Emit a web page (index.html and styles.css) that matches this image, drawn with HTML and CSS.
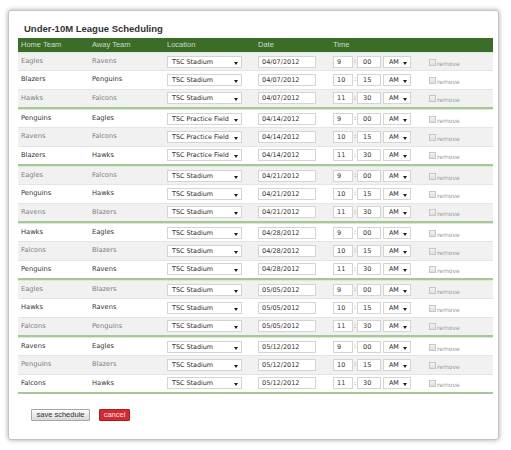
FILE: index.html
```html
<!DOCTYPE html>
<html lang="en">
<head>
<meta charset="utf-8">
<title>Under-10M League Scheduling</title>
<link rel="stylesheet" href="styles.css">
</head>
<body>
<div class="page">
  <div class="card">
    <h1 class="title">Under-10M League Scheduling</h1>
    <div class="sched">
      <div class="head">
        <span>Home Team</span><span>Away Team</span><span>Location</span><span>Date</span><span>Time</span><span></span>
      </div>

      <div class="group">
        <div class="row a"><span>Eagles</span><span>Ravens</span><span class="sel loc"><select><option>TSC Stadium</option></select></span><span><input class="date" type="text" value="04/07/2012"></span><span class="time"><input class="hr" type="text" value="9"><i>:</i><input class="mn" type="text" value="00"><span class="sel ap"><select><option>AM</option></select></span></span><label class="rm"><input type="checkbox"><span>remove</span></label></div>
        <div class="row b"><span>Blazers</span><span>Penguins</span><span class="sel loc"><select><option>TSC Stadium</option></select></span><span><input class="date" type="text" value="04/07/2012"></span><span class="time"><input class="hr" type="text" value="10"><i>:</i><input class="mn" type="text" value="15"><span class="sel ap"><select><option>AM</option></select></span></span><label class="rm"><input type="checkbox"><span>remove</span></label></div>
        <div class="row a"><span>Hawks</span><span>Falcons</span><span class="sel loc"><select><option>TSC Stadium</option></select></span><span><input class="date" type="text" value="04/07/2012"></span><span class="time"><input class="hr" type="text" value="11"><i>:</i><input class="mn" type="text" value="30"><span class="sel ap"><select><option>AM</option></select></span></span><label class="rm"><input type="checkbox"><span>remove</span></label></div>
      </div>

      <div class="group">
        <div class="row b"><span>Penguins</span><span>Eagles</span><span class="sel loc"><select><option>TSC Practice Field</option></select></span><span><input class="date" type="text" value="04/14/2012"></span><span class="time"><input class="hr" type="text" value="9"><i>:</i><input class="mn" type="text" value="00"><span class="sel ap"><select><option>AM</option></select></span></span><label class="rm"><input type="checkbox"><span>remove</span></label></div>
        <div class="row a"><span>Ravens</span><span>Falcons</span><span class="sel loc"><select><option>TSC Practice Field</option></select></span><span><input class="date" type="text" value="04/14/2012"></span><span class="time"><input class="hr" type="text" value="10"><i>:</i><input class="mn" type="text" value="15"><span class="sel ap"><select><option>AM</option></select></span></span><label class="rm"><input type="checkbox"><span>remove</span></label></div>
        <div class="row b"><span>Blazers</span><span>Hawks</span><span class="sel loc"><select><option>TSC Practice Field</option></select></span><span><input class="date" type="text" value="04/14/2012"></span><span class="time"><input class="hr" type="text" value="11"><i>:</i><input class="mn" type="text" value="30"><span class="sel ap"><select><option>AM</option></select></span></span><label class="rm"><input type="checkbox"><span>remove</span></label></div>
      </div>

      <div class="group">
        <div class="row a"><span>Eagles</span><span>Falcons</span><span class="sel loc"><select><option>TSC Stadium</option></select></span><span><input class="date" type="text" value="04/21/2012"></span><span class="time"><input class="hr" type="text" value="9"><i>:</i><input class="mn" type="text" value="00"><span class="sel ap"><select><option>AM</option></select></span></span><label class="rm"><input type="checkbox"><span>remove</span></label></div>
        <div class="row b"><span>Penguins</span><span>Hawks</span><span class="sel loc"><select><option>TSC Stadium</option></select></span><span><input class="date" type="text" value="04/21/2012"></span><span class="time"><input class="hr" type="text" value="10"><i>:</i><input class="mn" type="text" value="15"><span class="sel ap"><select><option>AM</option></select></span></span><label class="rm"><input type="checkbox"><span>remove</span></label></div>
        <div class="row a"><span>Ravens</span><span>Blazers</span><span class="sel loc"><select><option>TSC Stadium</option></select></span><span><input class="date" type="text" value="04/21/2012"></span><span class="time"><input class="hr" type="text" value="11"><i>:</i><input class="mn" type="text" value="30"><span class="sel ap"><select><option>AM</option></select></span></span><label class="rm"><input type="checkbox"><span>remove</span></label></div>
      </div>

      <div class="group">
        <div class="row b"><span>Hawks</span><span>Eagles</span><span class="sel loc"><select><option>TSC Stadium</option></select></span><span><input class="date" type="text" value="04/28/2012"></span><span class="time"><input class="hr" type="text" value="9"><i>:</i><input class="mn" type="text" value="00"><span class="sel ap"><select><option>AM</option></select></span></span><label class="rm"><input type="checkbox"><span>remove</span></label></div>
        <div class="row a"><span>Falcons</span><span>Blazers</span><span class="sel loc"><select><option>TSC Stadium</option></select></span><span><input class="date" type="text" value="04/28/2012"></span><span class="time"><input class="hr" type="text" value="10"><i>:</i><input class="mn" type="text" value="15"><span class="sel ap"><select><option>AM</option></select></span></span><label class="rm"><input type="checkbox"><span>remove</span></label></div>
        <div class="row b"><span>Penguins</span><span>Ravens</span><span class="sel loc"><select><option>TSC Stadium</option></select></span><span><input class="date" type="text" value="04/28/2012"></span><span class="time"><input class="hr" type="text" value="11"><i>:</i><input class="mn" type="text" value="30"><span class="sel ap"><select><option>AM</option></select></span></span><label class="rm"><input type="checkbox"><span>remove</span></label></div>
      </div>

      <div class="group">
        <div class="row a"><span>Eagles</span><span>Blazers</span><span class="sel loc"><select><option>TSC Stadium</option></select></span><span><input class="date" type="text" value="05/05/2012"></span><span class="time"><input class="hr" type="text" value="9"><i>:</i><input class="mn" type="text" value="00"><span class="sel ap"><select><option>AM</option></select></span></span><label class="rm"><input type="checkbox"><span>remove</span></label></div>
        <div class="row b"><span>Hawks</span><span>Ravens</span><span class="sel loc"><select><option>TSC Stadium</option></select></span><span><input class="date" type="text" value="05/05/2012"></span><span class="time"><input class="hr" type="text" value="10"><i>:</i><input class="mn" type="text" value="15"><span class="sel ap"><select><option>AM</option></select></span></span><label class="rm"><input type="checkbox"><span>remove</span></label></div>
        <div class="row a"><span>Falcons</span><span>Penguins</span><span class="sel loc"><select><option>TSC Stadium</option></select></span><span><input class="date" type="text" value="05/05/2012"></span><span class="time"><input class="hr" type="text" value="11"><i>:</i><input class="mn" type="text" value="30"><span class="sel ap"><select><option>AM</option></select></span></span><label class="rm"><input type="checkbox"><span>remove</span></label></div>
      </div>

      <div class="group">
        <div class="row b"><span>Ravens</span><span>Eagles</span><span class="sel loc"><select><option>TSC Stadium</option></select></span><span><input class="date" type="text" value="05/12/2012"></span><span class="time"><input class="hr" type="text" value="9"><i>:</i><input class="mn" type="text" value="00"><span class="sel ap"><select><option>AM</option></select></span></span><label class="rm"><input type="checkbox"><span>remove</span></label></div>
        <div class="row a"><span>Penguins</span><span>Blazers</span><span class="sel loc"><select><option>TSC Stadium</option></select></span><span><input class="date" type="text" value="05/12/2012"></span><span class="time"><input class="hr" type="text" value="10"><i>:</i><input class="mn" type="text" value="15"><span class="sel ap"><select><option>AM</option></select></span></span><label class="rm"><input type="checkbox"><span>remove</span></label></div>
        <div class="row b"><span>Falcons</span><span>Hawks</span><span class="sel loc"><select><option>TSC Stadium</option></select></span><span><input class="date" type="text" value="05/12/2012"></span><span class="time"><input class="hr" type="text" value="11"><i>:</i><input class="mn" type="text" value="30"><span class="sel ap"><select><option>AM</option></select></span></span><label class="rm"><input type="checkbox"><span>remove</span></label></div>
      </div>
    </div>

    <div class="actions">
      <button class="btn save" type="button">save schedule</button>
      <button class="btn cancel" type="button">cancel</button>
    </div>
  </div>
</div>
</body>
</html>
```

FILE: styles.css
```css
html, body {
  margin: 0;
  background: #fff;
}

.page {
  padding: 10px 12px 12px 8px;
}

.card {
  background: #fff;
  border: 1px solid #c4c4c4;
  border-radius: 3px;
  box-shadow: 0 0 5px rgba(0, 0, 0, 0.35);
  padding: 0 5px 0 9px;
}

.title {
  margin: 0;
  padding: 12px 0 3px 6px;
  font: bold 9.5px/12px "Liberation Sans", Arial, sans-serif;
  color: #333;
}

.sched {
  width: 475px;
}

.head,
.row {
  display: grid;
  grid-template-columns: 71px 75px 91px 75px 95px 68px;
  align-items: center;
}

.head {
  height: 14px;
  background: #3b6c28;
  color: #cbdcc2;
  font: 7.5px/14px "Liberation Sans", Arial, sans-serif;
}

.head > span,
.row > span,
.row > label {
  padding: 0 3px;
  white-space: nowrap;
}

.group {
  border-top: 1px solid #dbe9d3;
  border-bottom: 2px solid #a6c898;
}

.group:first-of-type {
  border-top: 0;
}

.row {
  box-sizing: border-box;
  height: 18.33px;
  border-bottom: 1px solid #e4e4e4;
  font: 6.7px/9px "DejaVu Sans", Verdana, sans-serif;
}

.row:last-child {
  border-bottom: 0;
  height: 17.33px;
}

.row.a {
  background: #f1f1f1;
  color: #808080;
}

.row.b {
  background: #fff;
  color: #333;
}

input[type="text"],
select {
  box-sizing: border-box;
  height: 12px;
  margin: 0;
  border: 1px solid #d4d4d4;
  border-radius: 0;
  background: #fff;
  color: #333;
  font: 6.5px "DejaVu Sans", Verdana, sans-serif;
  outline: none;
  vertical-align: middle;
}

input[type="text"] {
  padding: 0 0 0 3px;
}

.sel {
  position: relative;
  display: inline-block;
  vertical-align: middle;
}

.sel select {
  -webkit-appearance: none;
  appearance: none;
  width: 100%;
  padding: 0 0 0 4px;
  font-size: 6.4px;
  color: #2a2a2a;
}

.sel::after {
  content: "";
  position: absolute;
  right: 4px;
  top: 6px;
  border-left: 2px solid transparent;
  border-right: 2px solid transparent;
  border-top: 3px solid #1e1e1e;
  pointer-events: none;
}

.row > .sel.loc {
  padding: 0;
  margin-left: 3px;
  width: 75px;
  height: 12px;
}

.date {
  width: 58px;
  font-size: 6.7px;
}

.row > .time {
  display: flex;
  align-items: center;
}

.hr {
  width: 20px;
}

.time i {
  font-style: normal;
  width: 4px;
  text-align: center;
  font-size: 6.5px;
  color: #555;
}

.mn {
  width: 24px;
  padding-left: 5px !important;
}

.sel.ap {
  width: 28px;
  height: 12px;
  margin-left: 2px;
}

.sel.ap select {
  padding-left: 5px;
}

.rm {
  display: flex;
  align-items: flex-start;
  height: 12px;
  gap: 1px;
  color: #9a9a9a;
  font: 6px/7px "DejaVu Sans", Verdana, sans-serif;
}

.rm input {
  -webkit-appearance: none;
  appearance: none;
  width: 7px;
  height: 7px;
  margin: 3px 0 0 1px;
  border: 1px solid #c6c6c6;
  background: linear-gradient(#f4f4f4, #dedede);
  box-sizing: border-box;
}

.rm span {
  margin-top: 4px;
}

.actions {
  display: flex;
  gap: 9px;
  padding: 15px 0 18px 13px;
}

.btn {
  box-sizing: border-box;
  height: 12px;
  margin: 0;
  padding: 0;
  font: 7.5px/10px "Liberation Sans", Arial, sans-serif;
  text-align: center;
  border-radius: 1px;
}

.save {
  width: 59px;
  border: 1px solid #a6a6a6;
  background: linear-gradient(#fbfbfb, #d9d9d9);
  color: #333;
}

.cancel {
  width: 31px;
  border: 1px solid #a91d23;
  background: #d12a31;
  color: #fbe2e2;
}
```
